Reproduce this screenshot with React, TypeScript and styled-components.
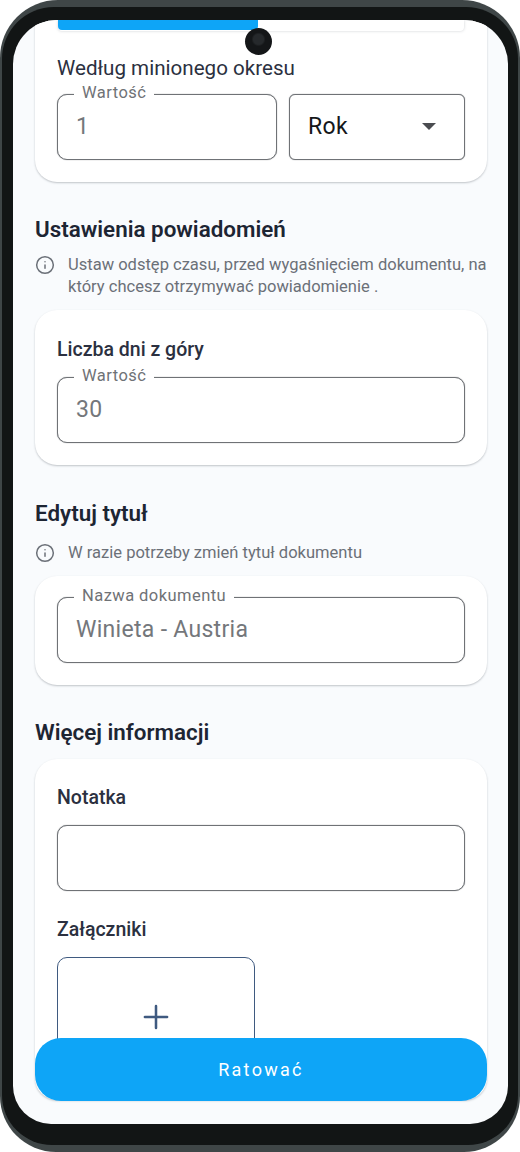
import * as React from "react";
import styled, { createGlobalStyle } from "styled-components";
import { Plus, Info } from "lucide-react";

const Global = createGlobalStyle`
	html, body {
		margin: 0;
		padding: 0;
		background: #fff;
	}
	* {
		box-sizing: border-box;
	}
`;

const Phone = styled.div`
	width: 520px;
	height: 1152px;
	padding: 7px 2px 7px 2px;
	background: #3f4647;
	border-radius: 58px 58px 56px 56px;
	font-family: Roboto, "Liberation Sans", sans-serif;
`;

const Bezel = styled.div`
	height: 100%;
	padding: 13px 10px 21px 11px;
	background: #121515;
	border-radius: 52px 52px 50px 50px;
`;

const Screen = styled.div`
	position: relative;
	height: 100%;
	overflow: hidden;
	background: #f9fbfd;
	border-radius: 44px 44px 38px 38px;
`;

const Camera = styled.div`
	position: absolute;
	top: 8px;
	left: 232px;
	width: 27px;
	height: 27px;
	border-radius: 50%;
	background: radial-gradient(circle at 50% 42%, #26292c 0 5px, #141618 7px);
`;

const Content = styled.div`
	padding: 0 21px 0 22px;
`;

const Card = styled.div<{ $pad?: string; $top?: number }>`
	margin-top: ${p => p.$top || 0}px;
	background: #fff;
	border-radius: 22px;
	padding: ${p => p.$pad || "24px 22px"};
	box-shadow: 0 1px 2px rgba(60, 70, 80, 0.3);
`;

const TopCard = styled(Card)`
	border-radius: 0 0 22px 22px;
	padding: 0 22px 22px;
	height: 162px;
`;

const Progress = styled.div`
	height: 11px;
	margin: 0 1px;
	background: #fff;
	border-radius: 0 0 4px 4px;
	box-shadow: 0 0 3px rgba(90, 100, 110, 0.3);
`;

const ProgressFill = styled.div<{ $width: number }>`
	width: ${p => p.$width}px;
	height: 10px;
	background: #0ea5f7;
	border-radius: 0 0 4px 4px;
`;

const PeriodTitle = styled.div`
	margin-top: 25px;
	font-size: 20.6px;
	line-height: 24px;
	color: #2b3040;
`;

const Row = styled.div`
	display: flex;
	gap: 12px;
	margin-top: 14px;
`;

const FieldBox = styled.div<{ $width?: number; $radius?: number; $top?: number }>`
	position: relative;
	display: flex;
	align-items: center;
	justify-content: space-between;
	width: ${p => (p.$width ? `${p.$width}px` : "100%")};
	height: 66px;
	margin-top: ${p => p.$top || 0}px;
	padding: 0 18px 1px;
	background: #fff;
	border: 1px solid #6f7276;
	border-radius: ${p => p.$radius || 10}px;
	box-shadow: 0 0 1px #6f7276;
`;

const Legend = styled.span`
	position: absolute;
	top: -12px;
	left: 16px;
	padding: 0 8px;
	background: #fff;
	font-size: 16.5px;
	line-height: 20px;
	letter-spacing: 0.45px;
	color: #6f7276;
`;

const Value = styled.span`
	font-size: 23px;
	letter-spacing: 0.3px;
	color: #74777b;
`;

const SelectValue = styled.span`
	font-size: 23px;
	letter-spacing: 0.3px;
	color: #15171a;
`;

const Caret = styled.span`
	width: 0;
	height: 0;
	margin-right: 10px;
	border-left: 7px solid transparent;
	border-right: 7px solid transparent;
	border-top: 7px solid #4a4c50;
`;

const SectionTitle = styled.h2<{ $top: number }>`
	margin: ${p => p.$top}px 0 0;
	font-size: 22.4px;
	line-height: 28px;
	font-weight: 600;
	color: #1d2533;
`;

const Hint = styled.div<{ $top: number }>`
	display: flex;
	gap: 13px;
	margin-top: ${p => p.$top}px;
	font-size: 16.55px;
	line-height: 22px;
	color: #6b7078;
	svg {
		flex: none;
		margin-top: 1px;
		color: #6b7078;
	}
`;

const CardLabel = styled.div<{ $top?: number }>`
	margin-top: ${p => p.$top || 0}px;
	font-size: 19.5px;
	line-height: 26px;
	font-weight: 500;
	color: #2b3040;
`;

const AttachBox = styled.div`
	display: flex;
	align-items: center;
	justify-content: center;
	width: 198px;
	height: 120px;
	margin-top: 14px;
	color: #3f5a80;
	border: 1px solid #3f5a80;
	border-radius: 10px;
`;

const SaveButton = styled.button`
	position: absolute;
	left: 22px;
	bottom: 23px;
	width: 452px;
	height: 63px;
	border: 0;
	border-radius: 26px;
	background: #0ea5f7;
	color: #fff;
	font-family: inherit;
	font-size: 18px;
	font-weight: 400;
	letter-spacing: 2.3px;
`;

export default function App() {
	return (
		<Phone>
			<Global />
			<Bezel>
				<Screen>
					<Content>
						<TopCard>
							<Progress>
								<ProgressFill $width={200} />
							</Progress>
							<PeriodTitle>Według minionego okresu</PeriodTitle>
							<Row>
								<FieldBox $width={220}>
									<Legend>Wartość</Legend>
									<Value>1</Value>
								</FieldBox>
								<FieldBox $width={176} $radius={6}>
									<SelectValue>Rok</SelectValue>
									<Caret />
								</FieldBox>
							</Row>
						</TopCard>

						<SectionTitle $top={33}>Ustawienia powiadomień</SectionTitle>
						<Hint $top={11}>
							<Info size={20} strokeWidth={1.8} />
							<div>
								Ustaw odstęp czasu, przed wygaśnięciem dokumentu, na który
								chcesz otrzymywać powiadomienie .
							</div>
						</Hint>

						<Card $pad="27px 22px 22px" $top={12}>
							<CardLabel>Liczba dni z góry</CardLabel>
							<FieldBox $top={14}>
								<Legend>Wartość</Legend>
								<Value>30</Value>
							</FieldBox>
						</Card>

						<SectionTitle $top={34}>Edytuj tytuł</SectionTitle>
						<Hint $top={15}>
							<Info size={20} strokeWidth={1.8} />
							<div>W razie potrzeby zmień tytuł dokumentu</div>
						</Hint>

						<Card $pad="21px 22px 22px" $top={12}>
							<FieldBox>
								<Legend>Nazwa dokumentu</Legend>
								<Value>Winieta - Austria</Value>
							</FieldBox>
						</Card>

						<SectionTitle $top={33}>Więcej informacji</SectionTitle>

						<Card $pad="26px 22px 23px" $top={13}>
							<CardLabel>Notatka</CardLabel>
							<FieldBox $top={14} />
							<CardLabel $top={26}>Załączniki</CardLabel>
							<AttachBox>
								<Plus size={38} strokeWidth={1.6} />
							</AttachBox>
						</Card>
					</Content>
					<Camera />
					<SaveButton>Ratować</SaveButton>
				</Screen>
			</Bezel>
		</Phone>
	);
}
